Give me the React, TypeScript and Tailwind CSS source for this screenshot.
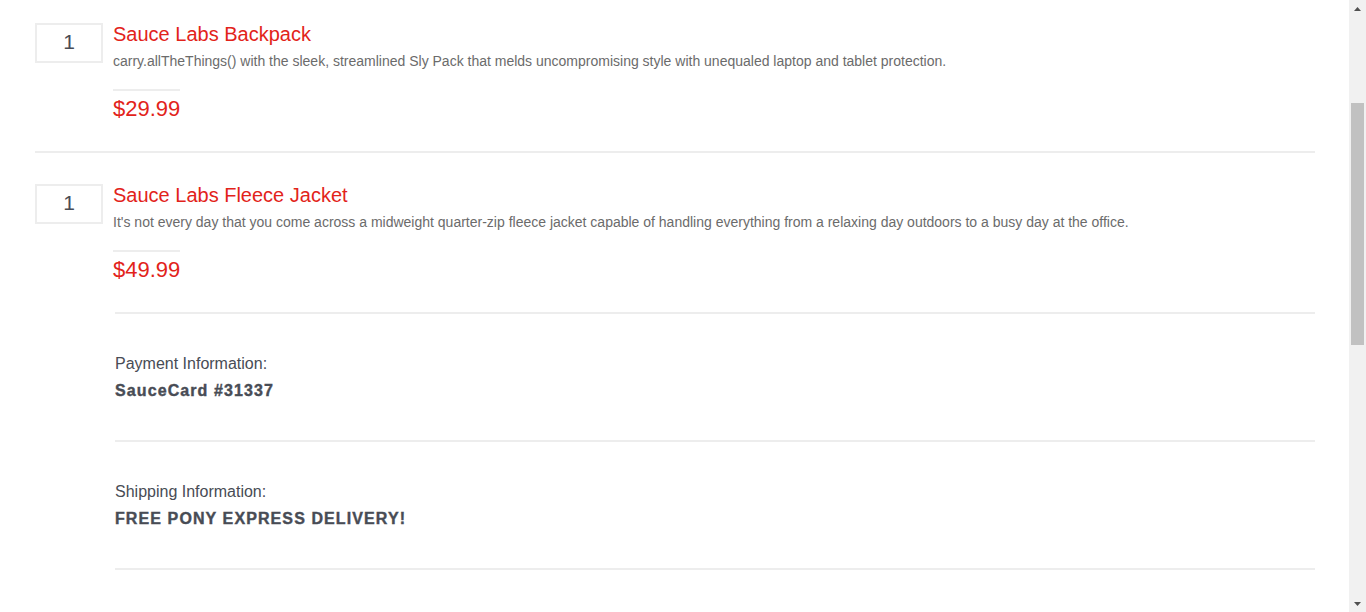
const items = [
  {
    qty: 1,
    name: 'Sauce Labs Backpack',
    desc: 'carry.allTheThings() with the sleek, streamlined Sly Pack that melds uncompromising style with unequaled laptop and tablet protection.',
    price: '$29.99',
  },
  {
    qty: 1,
    name: 'Sauce Labs Fleece Jacket',
    desc: "It's not every day that you come across a midweight quarter-zip fleece jacket capable of handling everything from a relaxing day outdoors to a busy day at the office.",
    price: '$49.99',
  },
]

const summary = [
  { label: 'Payment Information:', value: 'SauceCard #31337' },
  { label: 'Shipping Information:', value: 'FREE PONY EXPRESS DELIVERY!' },
]

function CartItem({ item }: { item: (typeof items)[number] }) {
  return (
    <div className="flex pb-[30px]">
      <div className="flex h-[40px] w-[68px] shrink-0 items-center justify-center border-2 border-[#ededed] pb-[2px] text-[21px] text-[#484c55]">
        {item.qty}
      </div>
      <div className="ml-[10px] flex-1">
        <div className="text-[20px] leading-[22px] text-[#e2231a]">{item.name}</div>
        <div className="mt-[6px] text-[14px] leading-[20px] text-[#6b6b6b]">{item.desc}</div>
        <div className="mt-[18px] h-[2px] w-[67px] bg-[#ededed]" />
        <div className="mt-[6px] text-[22px] leading-[24px] text-[#e2231a]">{item.price}</div>
      </div>
    </div>
  )
}

function Scrollbar() {
  return (
    <div className="flex w-[17px] shrink-0 flex-col bg-[#f1f1f1]">
      <div className="flex h-[17px] items-center justify-center">
        <svg width="7" height="4" viewBox="0 0 7 4" className="fill-[#505050]">
          <path d="M3.5 0 L7 4 L0 4 Z" />
        </svg>
      </div>
      <div className="flex-1">
        <div className="mx-auto mt-[86px] h-[242px] w-[13px] bg-[#c1c1c1]" />
      </div>
      <div className="flex h-[17px] items-center justify-center">
        <svg width="7" height="4" viewBox="0 0 7 4" className="fill-[#505050]">
          <path d="M0 0 L7 0 L3.5 4 Z" />
        </svg>
      </div>
    </div>
  )
}

export default function App() {
  return (
    <div className="flex h-[612px] overflow-hidden bg-white font-['Liberation_Sans',Arial,sans-serif]">
      <div className="flex-1 pt-[23px] pl-[35px] pr-[34px]">
        {items.map((item, i) => (
          <div key={item.name}>
            {i > 0 && <div className="mb-[31px] h-[2px] bg-[#ededed]" />}
            <CartItem item={item} />
          </div>
        ))}
        <div className="ml-[80px]">
          {summary.map((s) => (
            <div key={s.label} className="border-t-2 border-[#ededed] pt-[40px] pb-[39px]">
              <div className="text-[16px] leading-[20px] text-[#484c55]">{s.label}</div>
              <div className="mt-[7px] text-[16px] font-bold leading-[20px] tracking-[1.1px] text-[#484c55] [-webkit-text-stroke:0.4px_#484c55]">
                {s.value}
              </div>
            </div>
          ))}
          <div className="h-[2px] bg-[#ededed]" />
        </div>
      </div>
      <Scrollbar />
    </div>
  )
}
